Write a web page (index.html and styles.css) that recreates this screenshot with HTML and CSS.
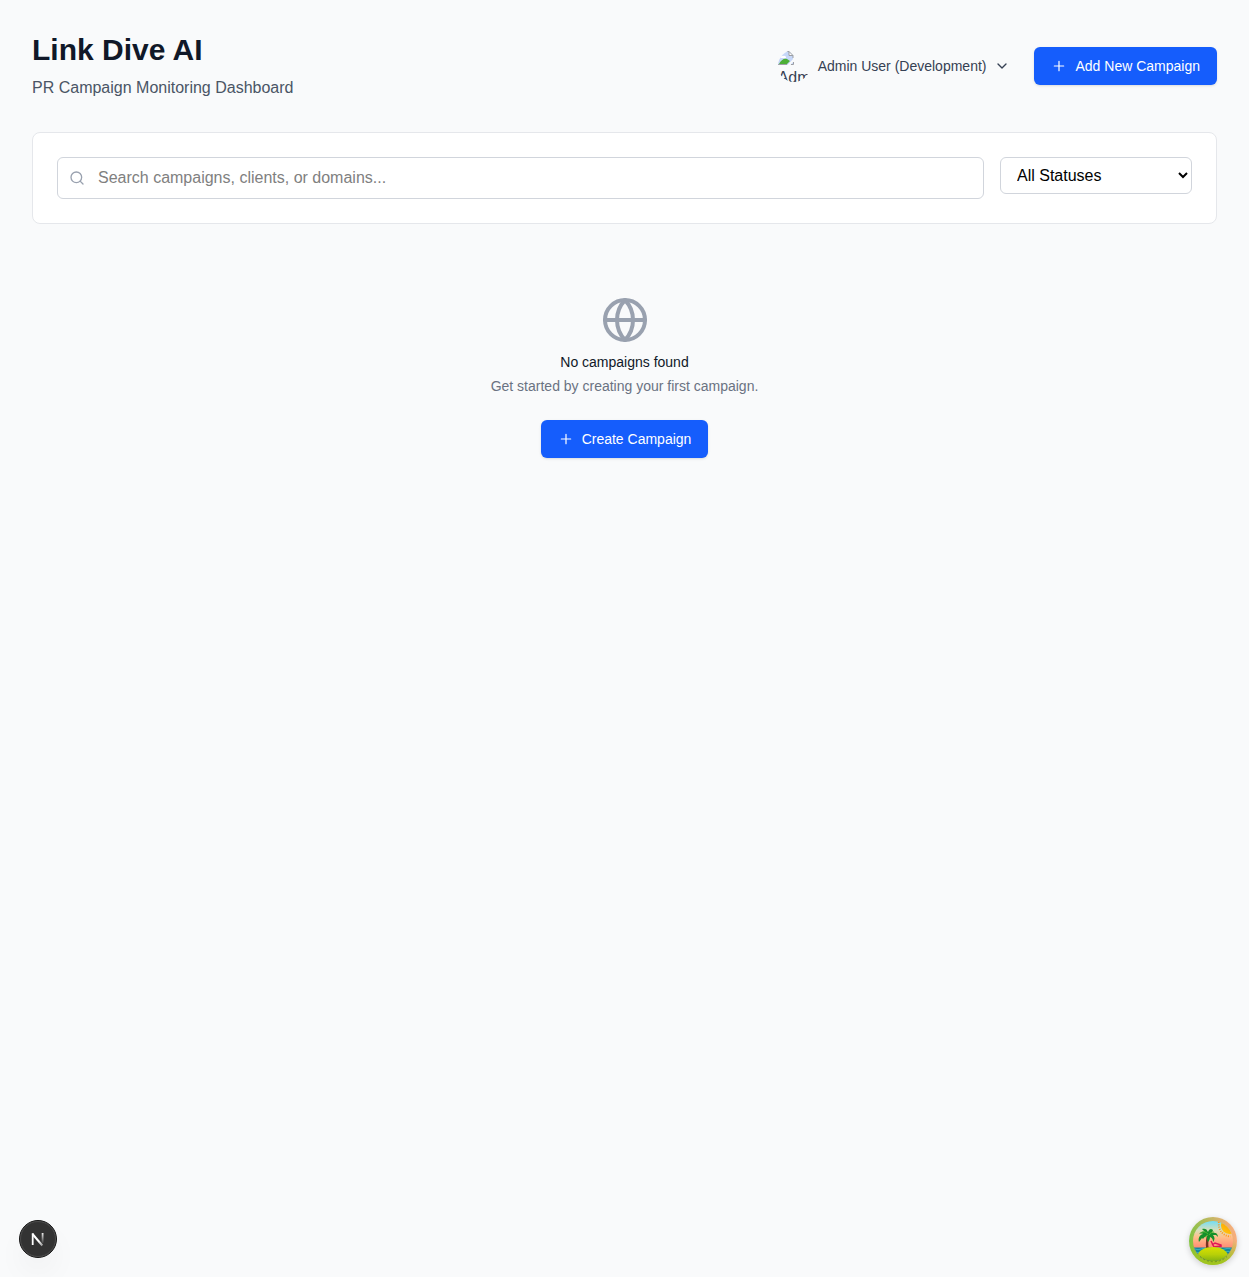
FILE: index.html
```html
<!DOCTYPE html>
<html lang="en">
<head>
<meta charset="utf-8">
<title>Link Dive AI</title>
<link rel="stylesheet" href="styles.css">
</head>
<body>
<main class="page">
  <header class="header">
    <div>
      <h1 class="title">Link Dive AI</h1>
      <p class="subtitle">PR Campaign Monitoring Dashboard</p>
    </div>
    <div class="actions">
      <button class="user" type="button">
        <span class="avatar">
          <svg width="16" height="16" viewBox="0 0 16 16">
            <path d="M0 1h11l4 4v10H0z" fill="#c6d7f8"/>
            <path d="M2 8a2 2 0 0 1 3-2 2 2 0 0 1 3 2z" fill="#fff"/>
            <path d="M1 14c2-4 5-6 8-5l3 2-3 3z" fill="#4caf36"/>
            <path d="M9 15.500L16 8v3l-4 4.500z" fill="#f9fafb"/>
            <path d="M11 1v4h4" fill="#fff"/>
            <path d="M0 1.500h11l4 4V8M11 1.500v4h4M0 14.500h9M13 14.500h2.500V12" fill="none" stroke="#9c9fa5"/>
          </svg>
          <span class="avatar-alt">Adm</span>
        </span>
        <span>Admin User (Development)</span>
        <svg class="icon" viewBox="0 0 24 24"><path d="m6 9 6 6 6-6"/></svg>
      </button>
      <button class="button" type="button">
        <svg class="icon" viewBox="0 0 24 24"><path d="M5 12h14M12 5v14"/></svg>
        <span>Add New Campaign</span>
      </button>
    </div>
  </header>

  <section class="filters">
    <label class="search">
      <svg class="icon" viewBox="0 0 24 24"><circle cx="11" cy="11" r="8"/><path d="m21 21-4.340-4.340"/></svg>
      <input class="search-input" type="text" placeholder="Search campaigns, clients, or domains...">
    </label>
    <select class="status"><option>All Statuses</option></select>
  </section>

  <section class="empty">
    <svg class="icon globe" viewBox="0 0 24 24"><circle cx="12" cy="12" r="10"/><path d="M12 2a14.500 14.500 0 0 0 0 20 14.500 14.500 0 0 0 0-20M2 12h20"/></svg>
    <h3 class="empty-title">No campaigns found</h3>
    <p class="empty-text">Get started by creating your first campaign.</p>
    <button class="button" type="button">
      <svg class="icon" viewBox="0 0 24 24"><path d="M5 12h14M12 5v14"/></svg>
      <span>Create Campaign</span>
    </button>
  </section>
</main>

<div class="dev-badge">
  <svg width="38" height="38" viewBox="0 0 38 38">
    <defs>
      <linearGradient id="stem" x1="0" y1="12" x2="0" y2="24" gradientUnits="userSpaceOnUse"><stop stop-color="#fff"/><stop offset="1" stop-color="#fff" stop-opacity="0"/></linearGradient>
      <linearGradient id="diag" x1="20" y1="21" x2="25" y2="27" gradientUnits="userSpaceOnUse"><stop stop-color="#fff"/><stop offset="1" stop-color="#fff" stop-opacity=".3"/></linearGradient>
    </defs>
    <circle cx="19" cy="19" r="18.500" fill="#333" stroke="#171717"/>
    <circle cx="19" cy="19" r="17.500" fill="none" stroke="#4b4b4b"/>
    <path d="M13.500 14l9.800 11.500" fill="none" stroke="url(#diag)" stroke-width="2"/>
    <path d="M13.700 25V13.200" stroke="#fff" stroke-width="1.800"/>
    <path d="M23.600 13v10" stroke="url(#stem)" stroke-width="1.800"/>
  </svg>
</div>

<div class="query-badge">
  <svg width="48" height="48" viewBox="0 0 48 48">
    <defs>
      <linearGradient id="ring" x1="2" y1="28" x2="46" y2="18" gradientUnits="userSpaceOnUse"><stop stop-color="#80c343"/><stop offset=".45" stop-color="#b5ba5c"/><stop offset="1" stop-color="#f6ad7c"/></linearGradient>
      <linearGradient id="ring-bottom" x1="0" y1="24" x2="0" y2="46" gradientUnits="userSpaceOnUse"><stop stop-color="#a4c51d" stop-opacity="0"/><stop offset="1" stop-color="#a0c51c"/></linearGradient>
      <linearGradient id="sky" x1="0" y1="4" x2="0" y2="33" gradientUnits="userSpaceOnUse"><stop stop-color="#72def5"/><stop offset=".32" stop-color="#d9dfb9"/><stop offset=".55" stop-color="#ffc08b"/><stop offset="1" stop-color="#ff806e"/></linearGradient>
      <linearGradient id="island" x1="0" y1="30" x2="0" y2="45" gradientUnits="userSpaceOnUse"><stop stop-color="#d8e000"/><stop offset=".5" stop-color="#b8d008"/><stop offset="1" stop-color="#7daf12"/></linearGradient>
      <linearGradient id="sun" x1="34" y1="18" x2="42" y2="6" gradientUnits="userSpaceOnUse"><stop stop-color="#ffcb12"/><stop offset="1" stop-color="#ff9d00"/></linearGradient>
      <clipPath id="scene"><circle cx="24" cy="24" r="20"/></clipPath>
    </defs>
    <circle cx="24" cy="24" r="24" fill="url(#ring)"/>
    <circle cx="24" cy="24" r="24" fill="url(#ring-bottom)"/>
    <g clip-path="url(#scene)">
      <path d="M0 0h48v48H0z" fill="url(#sky)"/>
      <circle cx="40.500" cy="8.500" r="8.500" fill="url(#sun)"/>
      <path d="M29.800 5c-.8 8 4 14 11.700 14.500" fill="none" stroke="#ff9518" stroke-width="1.800" stroke-dasharray="1 1.300"/>
      <path d="M0 30.500h48V48H0z" fill="#12859b"/>
      <path d="M0 32q3-1.500 6 0t6 0 6 0 6 0 6 0 6 0 6 0 6 0M0 35q3-1.500 6 0t6 0 6 0 6 0 6 0 6 0 6 0 6 0" fill="none" stroke="#42bdc9" stroke-width=".8"/>
      <path d="M22 24l3 6 7-1M23 28l3-2 6 2v2" fill="none" stroke="#e01856" stroke-width="1.500"/>
      <path d="M20 17c-2 4-2.500 8-1.500 15" fill="none" stroke="#783321" stroke-width="2.500"/>
      <path d="M8 39c2-6 8-9 16-9s13 3 15.500 8.500L37 48H11z" fill="url(#island)"/>
      <path transform="translate(1 0)" d="M19 18c-3-4-7-5-10-1 3-1 4 0 4 0-4 1-5 5-4 8l3-4 1 1c1-2 3-3 5-4-2 3-1 5 0 7 1-1 2-3 2-5 2 1 3 2 3 5 2-2 2-5 0-7h3l2 2c0-4-3-5-6-4l1-3c-2-2-4-1-5 2-1-3-3-4-6-3l2 2z" fill="#15902a"/>
      <path d="M19 17c-2-2-5-3-7-1M20 18c1-2 3-3 5-3M19 18l-3 2" fill="none" stroke="#54b633"/>
    </g>
    <path d="M11 39.500a20 20 0 0 0 27 0" fill="none" stroke="#527418" stroke-width=".6" stroke-dasharray="2 2"/>
  </svg>
</div>
</body>
</html>
```

FILE: styles.css
```css
* { box-sizing: border-box; }

body {
  margin: 0;
  min-height: 100vh;
  background: #f9fafb;
  color: #101828;
  font-family: "Liberation Sans", Arial, sans-serif;
  font-size: 16px;
  line-height: 24px;
}

h1, h3, p { margin: 0; }
button, input, select { font-family: inherit; margin: 0; }
svg { display: block; flex-shrink: 0; }

.page { padding: 32px; }

.header {
  display: flex;
  justify-content: space-between;
  align-items: center;
  margin-bottom: 32px;
}

.title { font-size: 30px; line-height: 35px; font-weight: 700; }
.subtitle { margin-top: 9px; color: #4a5565; }
.actions { display: flex; align-items: center; gap: 16px; }

.icon {
  width: 16px;
  height: 16px;
  fill: none;
  stroke: currentColor;
  stroke-width: 2;
  stroke-linecap: round;
  stroke-linejoin: round;
}

.user {
  display: flex;
  align-items: center;
  gap: 8px;
  padding: 8px;
  border: 0;
  background: none;
  color: #364153;
  font-size: 14px;
  line-height: 20px;
}

.avatar {
  width: 32px;
  height: 32px;
  border-radius: 50%;
  overflow: hidden;
  text-align: left;
}

.avatar-alt { display: block; font-size: 16px; line-height: 24px; }

.button {
  display: inline-flex;
  align-items: center;
  gap: 8px;
  padding: 8px 16px;
  border: 1px solid transparent;
  border-radius: 6px;
  background: #155dfc;
  color: #fff;
  font-size: 14px;
  line-height: 20px;
  box-shadow: 0 1px 3px rgba(0, 0, 0, .1), 0 1px 2px -1px rgba(0, 0, 0, .1);
}

.button .icon { stroke-width: 1.8; }

.filters {
  display: flex;
  align-items: flex-start;
  gap: 16px;
  padding: 24px;
  border: 1px solid #e5e7eb;
  border-radius: 8px;
  background: #fff;
  margin-bottom: 24px;
}

.search {
  flex: 1;
  display: flex;
  align-items: center;
  gap: 13px;
  height: 42px;
  padding: 0 11px;
  border: 1px solid #d1d5dc;
  border-radius: 6px;
  color: #99a1af;
}

.search-input {
  flex: 1;
  min-width: 0;
  padding: 0;
  border: 0;
  outline: 0;
  background: transparent;
  font-size: 16px;
  line-height: 24px;
}

.search-input::placeholder { color: #808080; }

.status {
  width: 192px;
  height: 37px;
  padding: 8px 12px;
  border: 1px solid #d1d5dc;
  border-radius: 6px;
  background-color: #fff;
  color: #000;
  font-size: 16px;
}

.empty {
  display: flex;
  flex-direction: column;
  align-items: center;
  padding: 48px 0;
}

.globe { width: 48px; height: 48px; color: #99a1af; }
.empty-title { margin-top: 8px; font-size: 14px; line-height: 20px; font-weight: 400; }
.empty-text { margin: 4px 0 24px; font-size: 14px; line-height: 20px; color: #6a7282; }

.dev-badge {
  position: fixed;
  left: 19px;
  bottom: 19px;
  border-radius: 50%;
  box-shadow: 0 16px 32px -8px rgba(0, 0, 0, .1);
}

.query-badge {
  position: fixed;
  right: 12px;
  bottom: 12px;
  border-radius: 50%;
  box-shadow: 0 2px 6px rgba(0, 0, 0, .18);
}
```
